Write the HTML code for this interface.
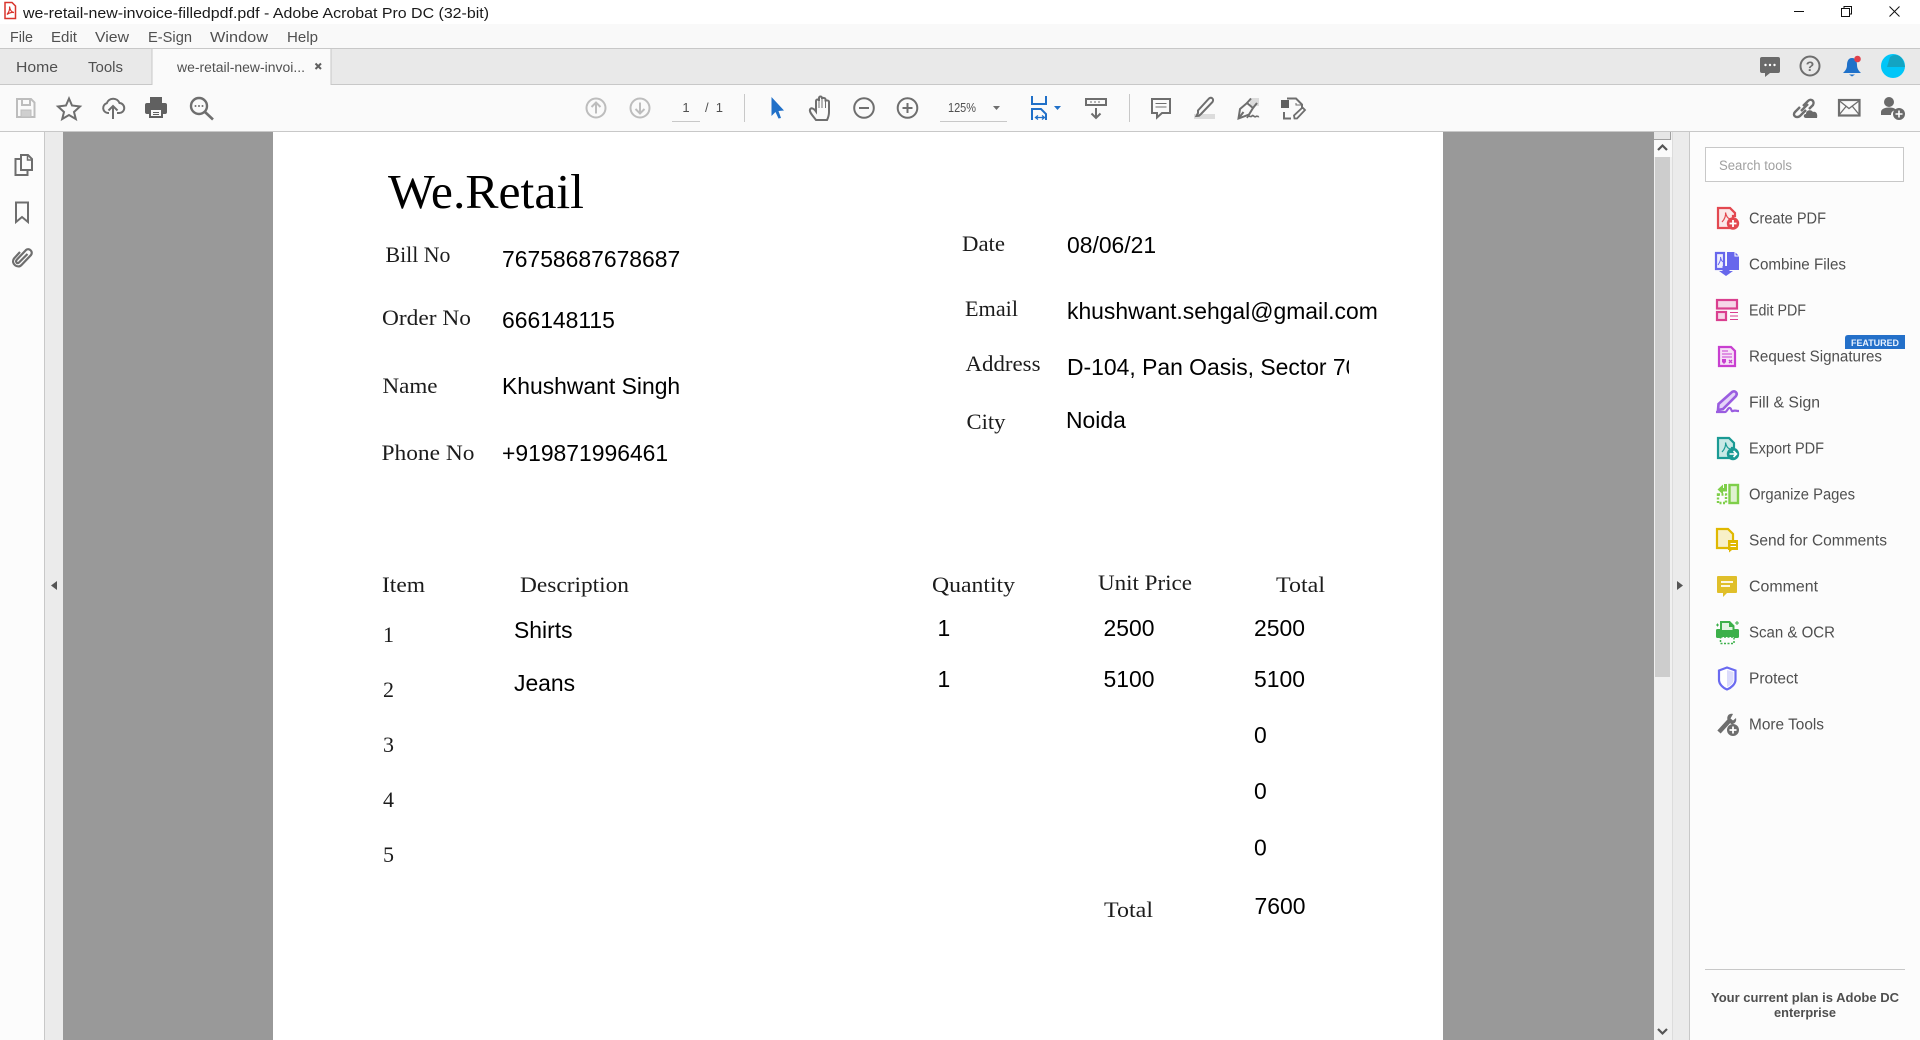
<!DOCTYPE html>
<html lang="en">
<head>
<meta charset="utf-8">
<title>we-retail-new-invoice-filledpdf.pdf - Adobe Acrobat Pro DC (32-bit)</title>
<style>
html,body{margin:0;padding:0;background:#fff;width:1920px;height:1040px;overflow:hidden}
svg{display:block}
text{white-space:pre}
.ui{font-family:"Liberation Sans",sans-serif;fill:#505050}
.m{font-size:15px}
.t{font-size:15.5px;fill:#4f4f4f}
.se{font-family:"Liberation Serif",serif;font-size:22px;fill:#1c1c1c}
.sa{font-family:"Liberation Sans",sans-serif;font-size:22.9px;fill:#000}
.ic{fill:none;stroke:#6e6e6e;stroke-width:2}
.il{fill:none;stroke:#bdbdbd;stroke-width:2}
</style>
</head>
<body>
<svg xmlns="http://www.w3.org/2000/svg" width="1920" height="1040" viewBox="0 0 1920 1040">
<defs><clipPath id="addr"><rect x="1060" y="340" width="289" height="50"/></clipPath></defs>

<!-- backgrounds -->
<rect width="1920" height="24" fill="#fff"/>
<rect y="24" width="1920" height="24" fill="#f9f9f9"/>
<rect y="48" width="1920" height="1" fill="#c8c8c8"/>
<rect y="49" width="1920" height="35" fill="#e9e9e9"/>
<rect y="84" width="1920" height="1" fill="#c8c8c8"/>
<rect y="85" width="1920" height="46" fill="#fafafa"/>
<rect y="131" width="1920" height="1" fill="#c8c8c8"/>

<!-- active tab -->
<rect x="152" y="48.5" width="179" height="37" fill="#fafafa"/>
<path d="M152 85V48.500H331V85" fill="none" stroke="#c8c8c8"/>

<!-- panes -->
<rect y="132" width="44" height="908" fill="#fcfcfc"/>
<rect x="44" y="132" width="1" height="908" fill="#c8c8c8"/>
<rect x="45" y="132" width="18" height="908" fill="#ebebeb"/>
<rect x="63" y="132" width="1591" height="908" fill="#999"/>
<rect x="273" y="132" width="1170" height="908" fill="#fff"/>
<rect x="1654" y="132" width="18" height="908" fill="#f0f0f0"/>
<rect x="1654" y="132" width="17" height="8" fill="#e6e6e6"/>
<path d="M1654 139.500H1670.500V132" fill="none" stroke="#a0a0a0"/>
<rect x="1654" y="140" width="18" height="17" fill="#fafafa"/>
<rect x="1655" y="157" width="15" height="520" fill="#cdcdcd"/>
<rect x="1672" y="132" width="17" height="908" fill="#ebebeb"/>
<rect x="1672" y="132" width="1" height="908" fill="#dcdcdc"/>
<rect x="1689" y="132" width="1" height="908" fill="#c8c8c8"/>
<rect x="1690" y="132" width="230" height="908" fill="#fcfcfc"/>
<path d="M1658 150L1662.500 145.500L1667 150" fill="none" stroke="#555" stroke-width="2.200"/>
<path d="M1658 1029L1662.500 1033.500L1667 1029" fill="none" stroke="#555" stroke-width="2.200"/>
<path d="M57 581V590L51 585.500Z" fill="#555"/>
<path d="M1677 581V590L1683 585.500Z" fill="#555"/>

<!-- title bar -->
<path d="M5 2.500H12L15.500 6V18.500H5Z" fill="#fff" stroke="#d8342c" stroke-width="1.500"/>
<path d="M7 14.500C9 12 10 9 9.500 6.500C10 10 11 12 14 12.500C11.500 12 9 13 7 14.500Z" fill="none" stroke="#d8342c" stroke-width="1.200"/>
<text x="23" y="18" font-family="Liberation Sans,sans-serif" font-size="15" fill="#1a1a1a" textLength="466" lengthAdjust="spacingAndGlyphs">we-retail-new-invoice-filledpdf.pdf - Adobe Acrobat Pro DC (32-bit)</text>
<rect x="1794" y="11" width="10" height="1" fill="#111"/>
<path d="M1841.500 8.500H1849.500V16.500H1841.500ZM1844 8.500V6.500H1851.500V14H1849.500" fill="none" stroke="#111"/>
<path d="M1889.500 6.500L1899.500 16.500M1899.500 6.500L1889.500 16.500" stroke="#111" fill="none"/>

<!-- menu -->
<g class="ui m">
<text x="10" y="42" textLength="23" lengthAdjust="spacingAndGlyphs">File</text>
<text x="51" y="42" textLength="26" lengthAdjust="spacingAndGlyphs">Edit</text>
<text x="95" y="42" textLength="34" lengthAdjust="spacingAndGlyphs">View</text>
<text x="148" y="42" textLength="44" lengthAdjust="spacingAndGlyphs">E-Sign</text>
<text x="210" y="42" textLength="58" lengthAdjust="spacingAndGlyphs">Window</text>
<text x="287" y="42" textLength="31" lengthAdjust="spacingAndGlyphs">Help</text>
</g>

<!-- tabs -->
<g class="ui m">
<text x="16" y="72" textLength="42" lengthAdjust="spacingAndGlyphs">Home</text>
<text x="88" y="72" textLength="35" lengthAdjust="spacingAndGlyphs">Tools</text>
<text x="177" y="72" font-size="13.500" textLength="128" lengthAdjust="spacingAndGlyphs">we-retail-new-invoi...</text>
</g>
<path d="M315.500 63.500L321 69M321 63.500L315.500 69" stroke="#606060" stroke-width="2" fill="none"/>

<!-- right header icons -->
<path d="M1762 57H1778Q1780 57 1780 59V71Q1780 73 1778 73H1770L1765 77V73H1762Q1760 73 1760 71V59Q1760 57 1762 57Z" fill="#6a6a6a"/>
<circle cx="1765.500" cy="65" r="1.200" fill="#fff"/><circle cx="1770" cy="65" r="1.200" fill="#fff"/><circle cx="1774.500" cy="65" r="1.200" fill="#fff"/>
<circle cx="1810" cy="66" r="9.500" class="ic"/>
<text x="1810" y="71" text-anchor="middle" font-family="Liberation Sans,sans-serif" font-size="14" font-weight="bold" fill="#6e6e6e">?</text>
<path d="M1852 58C1848 58 1847 62 1847 65C1847 69 1845 71 1843 73H1861C1859 71 1857 69 1857 65C1857 62 1856 58 1852 58Z" fill="#1f71c9"/>
<path d="M1849 74.500H1855L1852 76.500Z" fill="#1f71c9"/>
<circle cx="1857.500" cy="59" r="3.300" fill="#e0404a"/>
<circle cx="1893" cy="66" r="12" fill="#00c6f8"/>
<path d="M1890 57 Q1894 54 1898 55.500Q1903 57 1905 67H1887Z" fill="#13a4c2"/>

<!-- toolbar left -->
<path class="il" d="M17 99H31L34.500 102.500V117H17Z"/>
<path class="il" d="M22 99V105H30V99"/>
<rect x="21" y="110" width="10" height="7" fill="#cfcfcf" stroke="#bdbdbd"/>
<path class="ic" d="M69 98.500L72 105.500L80 106.500L74 112L75.800 119L69 115L62.200 119L64 112L58 106.500L66 105.500Z"/>
<path class="ic" d="M109 113H108A5 5 0 0 1 106.800 103.200A6.800 6.800 0 0 1 119.500 103A5 5 0 0 1 119 113H117"/>
<path class="ic" d="M113 119V106M108.500 110.500L113 106L117.500 110.500"/>
<rect x="150" y="97" width="12" height="6" fill="#606060"/>
<rect x="145" y="103" width="22" height="11" rx="2" fill="#606060"/>
<rect x="150" y="109" width="12" height="8" fill="#fafafa" stroke="#606060" stroke-width="2"/>
<rect x="153" y="112" width="6" height="1" fill="#606060"/><rect x="153" y="114" width="6" height="1" fill="#606060"/>
<circle cx="199" cy="106" r="8" fill="none" stroke="#6e6e6e" stroke-width="2.400"/>
<path d="M205 112L213 119.500" stroke="#6e6e6e" stroke-width="2.600" fill="none"/>
<circle cx="195.500" cy="106" r="1" fill="#6e6e6e"/><circle cx="199" cy="106" r="1" fill="#6e6e6e"/><circle cx="202.500" cy="106" r="1" fill="#6e6e6e"/>

<!-- page nav -->
<circle cx="596" cy="108" r="9.500" class="il"/>
<path class="il" d="M596 113.500V103M591.500 107L596 102.500L600.500 107"/>
<circle cx="640" cy="108" r="9.500" class="il"/>
<path class="il" d="M640 102.500V113M635.500 109L640 113.500L644.500 109"/>
<text x="686" y="112" text-anchor="middle" class="ui" font-size="13">1</text>
<rect x="672" y="121" width="28" height="1" fill="#c8c8c8"/>
<text x="705" y="112" class="ui" font-size="13" textLength="18">/ 1</text>
<rect x="744" y="94" width="1" height="28" fill="#c8c8c8"/>

<!-- tools -->
<path d="M771.500 97L784 110.500L778.500 111L781 118L778.500 118.500L775.500 112L771.500 116Z" fill="#2070c8"/>
<path class="ic" d="M816 120C813 116 809 112 810 109.500C811 107.500 813.500 108 816 111.500V101C816 99 819 99 819 101V98C819 96 822 96 822 98V99C822 97.500 825.500 97.500 825.500 99.500V101.500C825.500 100 829 100 829 102V112C829 116 828 118 827 120Z"/>
<path d="M819 101V108M822 99V108M825.500 101V108" stroke="#6e6e6e" fill="none"/>
<circle cx="864" cy="108" r="9.800" class="ic"/>
<rect x="859" y="107" width="10" height="2" fill="#6e6e6e"/>
<circle cx="907.500" cy="108" r="9.800" class="ic"/>
<path class="ic" d="M902.500 108H912.500M907.500 103V113"/>
<text x="948" y="112" class="ui" font-size="13" textLength="28" lengthAdjust="spacingAndGlyphs">125%</text>
<path d="M993 106H1000L996.500 110Z" fill="#6e6e6e"/>
<rect x="940" y="121" width="67" height="1" fill="#c8c8c8"/>

<path d="M1032 96V104H1046V96" fill="none" stroke="#2070c8" stroke-width="2"/>
<path d="M1032 120V109H1041L1046 114V120" fill="none" stroke="#2070c8" stroke-width="2"/>
<path d="M1036 117.500H1044M1038 115.500L1035.500 117.500L1038 119.500M1042 115.500L1044.500 117.500L1042 119.500" fill="none" stroke="#2070c8" stroke-width="1.300"/>
<path d="M1054 106H1061L1057.500 110Z" fill="#2070c8"/>
<rect x="1086" y="99" width="20" height="6" fill="none" stroke="#6e6e6e" stroke-width="2"/>
<path d="M1090 102h2M1094 102h2M1098 102h2" stroke="#6e6e6e" fill="none"/>
<path class="ic" d="M1096 108V118M1091.500 113.500L1096 118L1100.500 113.500"/>
<rect x="1129" y="94" width="1" height="28" fill="#c8c8c8"/>

<path class="ic" d="M1152 99H1170V113H1162L1157 117.500V113H1152Z"/>
<path d="M1155.500 103.500H1166.500M1155.500 107H1166.500" stroke="#6e6e6e" fill="none"/>
<rect x="1194" y="114" width="21" height="5" fill="#dcdcdc"/>
<path class="ic" d="M1198 113L1196.500 116L1199 115.800L1201 114L1212.500 102C1214.500 99 1211 96 1208.500 99L1198 110.500Z"/>
<rect x="1250" y="98" width="9" height="8" fill="#dcdcdc"/>
<path class="ic" d="M1238.500 118.500L1240 109L1247 103L1253 108L1249 114.500Z"/>
<path class="ic" d="M1247 103L1251 98.500M1253 108L1257 103M1238.500 118.500L1243.500 112"/>
<path d="M1247 118C1249 114 1250 118 1252 116C1253 114 1254 118 1256 116.500C1257 115.500 1258 117 1259 116.500" stroke="#6e6e6e" stroke-width="1.600" fill="none"/>
<rect x="1281" y="100" width="8" height="8" fill="#606060"/>
<path class="ic" d="M1287 98.500H1296L1302 104.500V109M1284 112V118.500H1291"/>
<path d="M1296 103V105H1301" stroke="#6e6e6e" fill="none"/>
<path d="M1294.500 118.500L1294 115.500L1302.500 107.500L1305 110L1297 118.500Z" fill="none" stroke="#6e6e6e" stroke-width="1.800"/>

<!-- right toolbar icons -->
<path d="M1803 106L1808 101C1811 98 1815 101 1813 105L1809 109M1806 110L1800 116C1796 119 1792 115 1795 112L1800 107" fill="none" stroke="#6e6e6e" stroke-width="2.400"/>
<path d="M1801 111L1808 104" fill="none" stroke="#6e6e6e" stroke-width="2.400"/>
<path d="M1806 118C1803 118 1803 114 1806 114C1806 110 1811 109 1813 112C1816 111 1818 114 1817 118Z" fill="#6a6a6a"/>
<rect x="1839" y="100" width="20.500" height="15.500" fill="none" stroke="#6e6e6e" stroke-width="2.200"/>
<path d="M1839 100.500L1849 108.500L1859.500 100.500M1839 115L1846 106.500M1859.500 115L1852.500 106.500" stroke="#6e6e6e" stroke-width="1.300" fill="none"/>
<circle cx="1889" cy="102" r="5" fill="#6a6a6a"/>
<path d="M1881 115V112C1881 109 1885 107.500 1889 107.500C1892 107.500 1895 108 1896 110C1892 110.500 1891 113 1891 115Z" fill="#6a6a6a"/>
<circle cx="1899" cy="114" r="6" fill="#6a6a6a"/>
<path d="M1895.500 114H1902.500M1899 110.500V117.500" stroke="#fff" stroke-width="1.600" fill="none"/>

<!-- left panel icons -->
<path class="ic" d="M21 159H15.500V175H27.500V170"/>
<path class="ic" d="M21 155H28L32 159V170H21Z"/>
<path d="M27.500 155V160H32" fill="none" stroke="#6e6e6e" stroke-width="1.500"/>
<path class="ic" d="M16 202.500H28V222L22 217L16 222Z"/>
<path d="M27.500 254L19 262.500C17 264.500 15 261.500 17 259.500L26 250C29 247.500 33.500 251.500 31 255L21.500 265C18 269 10.500 264 14 258.500L20 252" fill="none" stroke="#6e6e6e" stroke-width="2.200"/>

<!-- document -->
<text x="388" y="208" font-family="Liberation Serif,serif" font-size="49" fill="#000" textLength="196" lengthAdjust="spacingAndGlyphs">We.Retail</text>
<g class="se">
<text x="385.500" y="262" textLength="65" lengthAdjust="spacingAndGlyphs">Bill No</text>
<text x="382" y="325" textLength="89" lengthAdjust="spacingAndGlyphs">Order No</text>
<text x="382.500" y="393" textLength="55" lengthAdjust="spacingAndGlyphs">Name</text>
<text x="381.500" y="460" textLength="93" lengthAdjust="spacingAndGlyphs">Phone No</text>
<text x="962" y="251" textLength="43" lengthAdjust="spacingAndGlyphs">Date</text>
<text x="965" y="316" textLength="53" lengthAdjust="spacingAndGlyphs">Email</text>
<text x="965.500" y="371" textLength="75" lengthAdjust="spacingAndGlyphs">Address</text>
<text x="966.500" y="429" textLength="39" lengthAdjust="spacingAndGlyphs">City</text>
<text x="382" y="592" textLength="43" lengthAdjust="spacingAndGlyphs">Item</text>
<text x="520" y="592" textLength="109" lengthAdjust="spacingAndGlyphs">Description</text>
<text x="932" y="592" textLength="83" lengthAdjust="spacingAndGlyphs">Quantity</text>
<text x="1098" y="590" textLength="94" lengthAdjust="spacingAndGlyphs">Unit Price</text>
<text x="1276" y="592" textLength="49" lengthAdjust="spacingAndGlyphs">Total</text>
<text x="383" y="642">1</text>
<text x="383" y="697">2</text>
<text x="383" y="752">3</text>
<text x="383" y="807">4</text>
<text x="383" y="862">5</text>
<text x="1104" y="917" textLength="49" lengthAdjust="spacingAndGlyphs">Total</text>
</g>
<g class="sa">
<text x="502" y="267">76758687678687</text>
<text x="502" y="328">666148115</text>
<text x="502" y="394">Khushwant Singh</text>
<text x="502" y="461">+919871996461</text>
<text x="1067" y="253">08/06/21</text>
<text x="1067" y="319">khushwant.sehgal@gmail.com</text>
<text x="1067" y="375" clip-path="url(#addr)">D-104, Pan Oasis, Sector 70</text>
<text x="1066" y="428">Noida</text>
<text x="514" y="638">Shirts</text>
<text x="514" y="691">Jeans</text>
<text x="937.500" y="636">1</text>
<text x="937.500" y="687">1</text>
<text x="1103.500" y="636">2500</text>
<text x="1103.500" y="687">5100</text>
<text x="1254" y="636">2500</text>
<text x="1254" y="687">5100</text>
<text x="1254" y="743">0</text>
<text x="1254" y="799">0</text>
<text x="1254" y="855.500">0</text>
<text x="1254.500" y="914">7600</text>
</g>

<!-- right panel -->
<rect x="1705.500" y="147.500" width="198" height="34" fill="#fff" stroke="#c8c8c8"/>
<text x="1719" y="170" font-family="Liberation Sans,sans-serif" font-size="13.500" fill="#a0a0a0" textLength="73" lengthAdjust="spacingAndGlyphs">Search tools</text>

<g class="ui t">
<text x="1749" y="223.500" textLength="77" lengthAdjust="spacingAndGlyphs">Create PDF</text>
<text x="1749" y="269.500" textLength="97" lengthAdjust="spacingAndGlyphs">Combine Files</text>
<text x="1749" y="315.500" textLength="57" lengthAdjust="spacingAndGlyphs">Edit PDF</text>
<text x="1749" y="361.500" textLength="133" lengthAdjust="spacingAndGlyphs">Request Signatures</text>
<text x="1749" y="407.500" textLength="71" lengthAdjust="spacingAndGlyphs">Fill &amp; Sign</text>
<text x="1749" y="453.500" textLength="75" lengthAdjust="spacingAndGlyphs">Export PDF</text>
<text x="1749" y="499.500" textLength="106" lengthAdjust="spacingAndGlyphs">Organize Pages</text>
<text x="1749" y="545.500" textLength="138" lengthAdjust="spacingAndGlyphs">Send for Comments</text>
<text x="1749" y="591.500" textLength="69" lengthAdjust="spacingAndGlyphs">Comment</text>
<text x="1749" y="637.500" textLength="86" lengthAdjust="spacingAndGlyphs">Scan &amp; OCR</text>
<text x="1749" y="683.500" textLength="49" lengthAdjust="spacingAndGlyphs">Protect</text>
<text x="1749" y="729.500" textLength="75" lengthAdjust="spacingAndGlyphs">More Tools</text>
</g>

<path d="M1848 335H1905V349H1845V338Q1845 335 1848 335Z" fill="#2470c9"/>
<text x="1875" y="346" text-anchor="middle" font-family="Liberation Sans,sans-serif" font-size="9.500" font-weight="bold" fill="#e8f2ff" textLength="48" lengthAdjust="spacingAndGlyphs">FEATURED</text>

<!-- Create PDF -->
<path d="M1718 208H1730L1735 213V216H1733V228H1718Z" fill="#fbe9ea" stroke="#e34850" stroke-width="2.200"/>
<path d="M1722 222C1725 219 1726 215 1725.500 212.500C1726 216 1728 219 1731 219" fill="none" stroke="#e34850" stroke-width="1.200"/>
<circle cx="1733" cy="223.500" r="6.200" fill="#e34850"/>
<path d="M1729.500 223.500H1736.500M1733 220V227" stroke="#fff" stroke-width="1.800" fill="none"/>
<!-- Combine -->
<path d="M1716 253H1724V269H1716Z" fill="#eeeefe" stroke="#6767ec" stroke-width="2.200"/>
<path d="M1727 252H1735L1739 256V270H1727Z" fill="#6767ec"/>
<path d="M1735 252V256H1739" fill="none" stroke="#fff"/>
<path d="M1722.500 266V271H1719L1726 276L1733 271H1729.500V266Z" fill="#6767ec"/>
<path d="M1718 265C1720 262 1721 259 1720.500 257C1721 260 1722 262 1724 262" fill="none" stroke="#6767ec"/>
<!-- Edit -->
<rect x="1717" y="300" width="20" height="8.500" fill="#f6d6e8" stroke="#da3f8f" stroke-width="2.200"/>
<rect x="1717" y="312" width="9" height="8" fill="#f6d6e8" stroke="#da3f8f" stroke-width="2.200"/>
<path d="M1730 312.500H1738M1730 316H1738M1730 319.500H1738" stroke="#da3f8f" fill="none"/>
<!-- Request -->
<path d="M1719 347H1731L1735 351V366H1719Z" fill="#f6e0f7" stroke="#c83fd0" stroke-width="2.200"/>
<path d="M1722 351H1728M1722 354H1732M1722 357H1732" stroke="#c83fd0" fill="none"/>
<path d="M1722 359H1726V362L1724 364L1722 362Z" fill="#c83fd0"/>
<path d="M1729 360L1732 363M1732 360L1729 363" stroke="#c83fd0" stroke-width="1.300" fill="none"/>
<!-- Fill & Sign -->
<path d="M1718 410L1718.500 404L1732 392C1735 390 1738 393 1736 396L1723 409Z" fill="#e4d4f8" stroke="#9a5de0" stroke-width="2.600"/>
<path d="M1716 412H1725C1727 412 1728 407 1730 408C1732 409 1731 412 1733 411C1735 410 1736 411 1739 411" fill="none" stroke="#9a5de0" stroke-width="2.200"/>
<!-- Export -->
<path d="M1718 438H1729L1734 443V448H1732V458H1718Z" fill="#c8e9e6" stroke="#1a9a94" stroke-width="2.200"/>
<path d="M1722 452C1725 449 1726 445 1725.500 442.500C1726 446 1728 449 1731 449" fill="none" stroke="#1a9a94" stroke-width="1.200"/>
<circle cx="1733" cy="454" r="6.200" fill="#1a9a94"/>
<path d="M1729.500 454H1736M1733.500 451L1736.500 454L1733.500 457" stroke="#fff" stroke-width="1.600" fill="none"/>
<!-- Organize -->
<rect x="1729.500" y="485" width="8.500" height="18" fill="#dff2d0" stroke="#7fcf4a" stroke-width="2.400"/>
<rect x="1718" y="494.500" width="8" height="8.500" fill="none" stroke="#7fcf4a" stroke-width="2.400" stroke-dasharray="2 1.500"/>
<path d="M1727 484V491.500H1723V494.500L1717.500 489.500L1723 484.500V488H1724V484Z" fill="#7fcf4a"/>
<!-- Send -->
<path d="M1717 529H1728L1733 534V548H1717Z" fill="#f8f0c8" stroke="#e0b800" stroke-width="2.200"/>
<path d="M1728 540H1738V550H1732L1729 552.500V550H1728Z" fill="#e0b800"/>
<path d="M1730.500 543.500H1736M1730.500 546.500H1736" stroke="#fff" fill="none"/>
<!-- Comment -->
<path d="M1718 576H1736Q1737 576 1737 577V592Q1737 593 1736 593H1727L1723 597V593H1718Q1717 593 1717 592V577Q1717 576 1718 576Z" fill="#e0bf2a"/>
<path d="M1721 582H1733M1721 586H1730" stroke="#fff" stroke-width="1.800" fill="none"/>
<!-- Scan -->
<rect x="1716" y="629" width="23" height="9" rx="1.500" fill="#3cb04a"/>
<path d="M1721 631V622H1729.500L1733.500 626V631Z" fill="#dff3e0" stroke="#3cb04a" stroke-width="2"/>
<path d="M1729 622V627H1733.500" fill="#3cb04a"/>
<rect x="1720.500" y="637" width="13.500" height="6.500" fill="#fcfcfc" stroke="#3cb04a" stroke-dasharray="2 1.500" stroke-width="1.500"/>
<path d="M1716 625h3M1717.500 623.500v3M1735 623h4M1737 621v4" stroke="#3cb04a" fill="none"/>
<!-- Protect -->
<path d="M1727 667.500L1735.500 670.500V680C1735.500 684 1731 688 1727 689.500C1723 688 1719 684 1719 680V670.500Z" fill="#fff" stroke="#6a6af0" stroke-width="2.200"/>
<path d="M1727 670V687C1730 686 1733.500 683 1733.500 680V672Z" fill="#dcdcfb"/>
<!-- More Tools -->
<path d="M1719 732L1730 720" stroke="#6e6e6e" stroke-width="4.500" fill="none"/>
<path d="M1733 714C1729 713 1726.500 716 1727.500 720L1731 724C1734 724.500 1737 722 1736 718L1733 720.500L1730.500 718.500Z" fill="#6e6e6e"/>
<circle cx="1733" cy="730" r="6" fill="#6e6e6e"/>
<path d="M1729.500 730H1736.500M1733 726.500V733.500" stroke="#fff" stroke-width="1.800" fill="none"/>

<rect x="1705" y="969" width="200" height="1" fill="#c8c8c8"/>
<g font-family="Liberation Sans,sans-serif" font-size="12.500" font-weight="bold" fill="#4f4f4f" text-anchor="middle">
<text x="1805" y="1002" textLength="188" lengthAdjust="spacingAndGlyphs">Your current plan is Adobe DC</text>
<text x="1805" y="1017" textLength="62" lengthAdjust="spacingAndGlyphs">enterprise</text>
</g>
</svg>
</body>
</html>
